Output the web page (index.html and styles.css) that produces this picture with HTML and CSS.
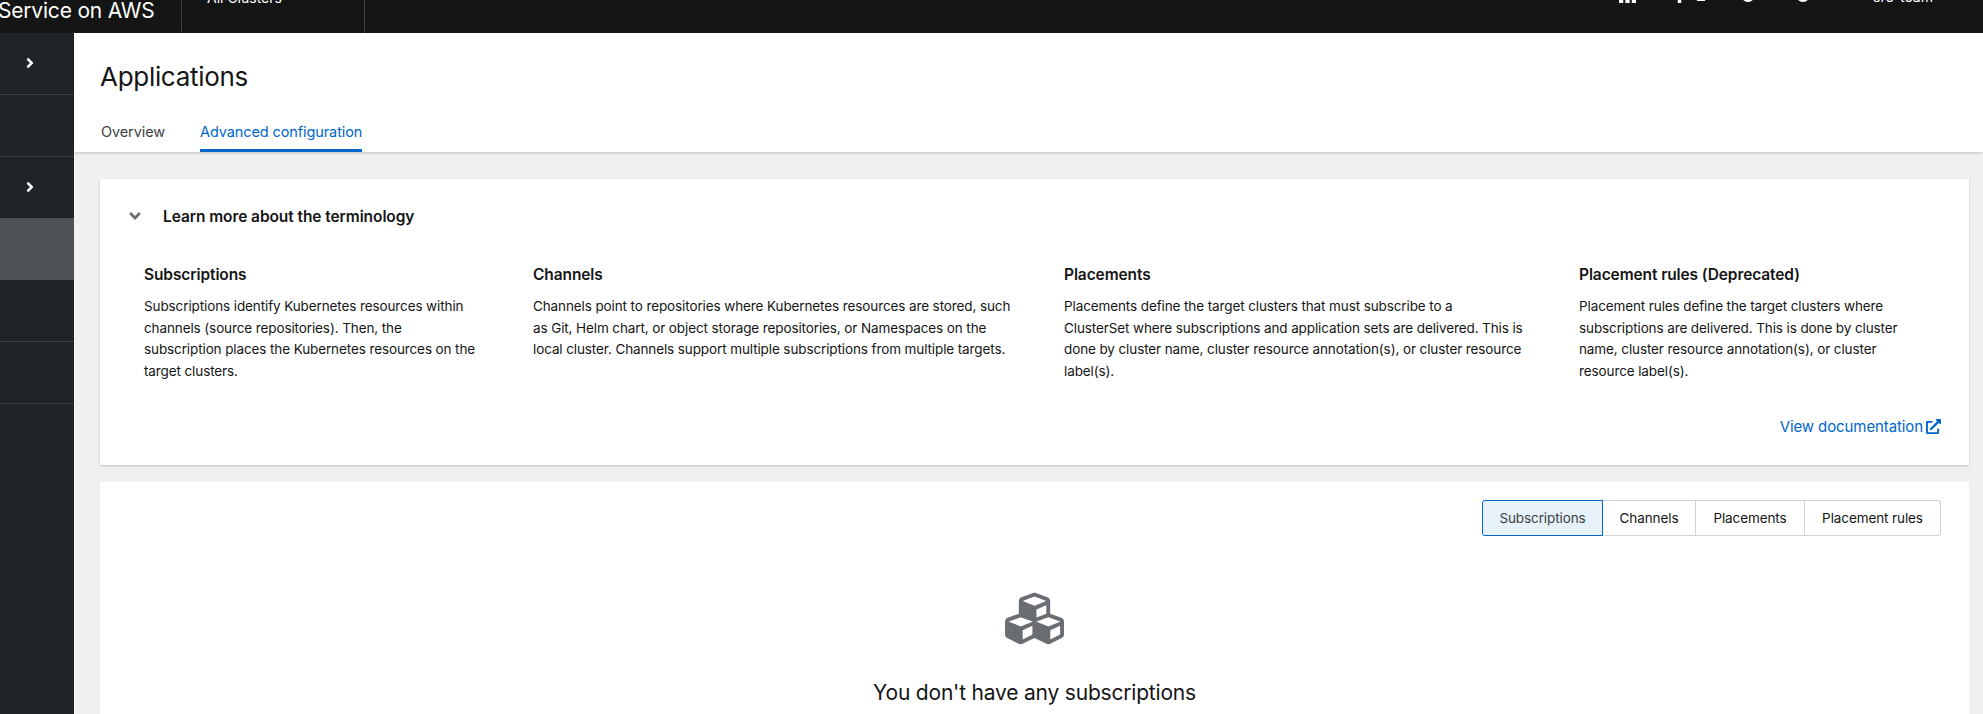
FILE: index.html
```html
<!DOCTYPE html>
<html lang="en">
<head>
<meta charset="utf-8">
<title>Applications</title>
<link rel="stylesheet" href="styles.css">
</head>
<body>
<header class="masthead">
  <div class="masthead-inner">
    <div class="brand">Service on AWS</div>
    <div class="context">All Clusters</div>
    <div class="tools">
      <svg class="tool-apps" viewBox="0 0 16 16"><path d="M0 0h4v4H0zM6 0h4v4H6zM12 0h4v4h-4zM0 6h4v4H0zM6 6h4v4H6zM12 6h4v4h-4zM0 12h4v4H0zM6 12h4v4H6zM12 12h4v4h-4z"/></svg>
      <svg class="tool-help" viewBox="0 0 8 16"><path d="M2 0h4v16H2z"/></svg>
      <svg class="tool-bar" viewBox="0 0 10 16"><path d="M1 11h8v3H1z"/></svg>
      <svg class="tool-round" viewBox="0 0 16 16"><circle cx="8" cy="8" r="7"/></svg>
      <svg class="tool-round second" viewBox="0 0 16 16"><circle cx="8" cy="8" r="7"/></svg>
      <span class="user">sre-team</span>
    </div>
  </div>
</header>
<div class="shell">
  <nav class="sidebar">
    <div class="nav-row"><svg class="chev" viewBox="0 0 256 512"><path d="M224.3 273l-136 136c-9.4 9.4-24.6 9.4-33.9 0l-22.6-22.6c-9.4-9.4-9.4-24.6 0-33.9l96.4-96.4-96.4-96.4c-9.4-9.4-9.4-24.6 0-33.9L54.3 103c9.4-9.4 24.6-9.4 33.9 0l136 136c9.5 9.4 9.5 24.6.1 34z"/></svg></div>
    <div class="nav-row"></div>
    <div class="nav-row flat"><svg class="chev" viewBox="0 0 256 512"><path d="M224.3 273l-136 136c-9.4 9.4-24.6 9.4-33.9 0l-22.6-22.6c-9.4-9.4-9.4-24.6 0-33.9l96.4-96.4-96.4-96.4c-9.4-9.4-9.4-24.6 0-33.9L54.3 103c9.4-9.4 24.6-9.4 33.9 0l136 136c9.5 9.4 9.5 24.6.1 34z"/></svg></div>
    <div class="nav-row selected"></div>
    <div class="nav-row"></div>
    <div class="nav-row"></div>
  </nav>
  <main class="main">
    <section class="page-head">
      <h1 class="title">Applications</h1>
      <div class="tabs">
        <a class="tab">Overview</a>
        <a class="tab active">Advanced configuration</a>
      </div>
    </section>
    <section class="content">
      <div class="card terms">
        <div class="terms-head">
          <svg class="down" viewBox="0 0 320 512"><path d="M143 352.3L7 216.3c-9.4-9.4-9.4-24.6 0-33.9l22.6-22.6c9.4-9.4 24.6-9.4 33.9 0l96.4 96.4 96.4-96.4c9.4-9.4 24.6-9.4 33.9 0l22.6 22.6c9.4 9.4 9.4 24.6 0 33.9l-136 136c-9.2 9.4-24.4 9.4-33.8 0z"/></svg>
          <span class="terms-title">Learn more about the terminology</span>
        </div>
        <div class="terms-grid">
          <div class="term">
            <h4>Subscriptions</h4>
            <p>Subscriptions identify Kubernetes resources within<br>channels (source repositories). Then, the<br>subscription places the Kubernetes resources on the<br>target clusters.</p>
          </div>
          <div class="term">
            <h4>Channels</h4>
            <p>Channels point to repositories where Kubernetes resources are stored, such<br>as Git, Helm chart, or object storage repositories, or Namespaces on the<br>local cluster. Channels support multiple subscriptions from multiple targets.</p>
          </div>
          <div class="term">
            <h4>Placements</h4>
            <p>Placements define the target clusters that must subscribe to a<br>ClusterSet where subscriptions and application sets are delivered. This is<br>done by cluster name, cluster resource annotation(s), or cluster resource<br>label(s).</p>
          </div>
          <div class="term">
            <h4>Placement rules (Deprecated)</h4>
            <p>Placement rules define the target clusters where<br>subscriptions are delivered. This is done by cluster<br>name, cluster resource annotation(s), or cluster<br>resource label(s).</p>
          </div>
        </div>
        <div class="doc-row">
          <a class="doc-link">View documentation
            <svg class="ext" viewBox="0 0 512 512"><path d="M432,320H400a16,16,0,0,0-16,16V448H64V128H208a16,16,0,0,0,16-16V80a16,16,0,0,0-16-16H48A48,48,0,0,0,0,112V464a48,48,0,0,0,48,48H400a48,48,0,0,0,48-48V336A16,16,0,0,0,432,320ZM488,0h-128c-21.37,0-32.05,25.91-17,41l35.73,35.73L135,320.37a24,24,0,0,0,0,34L157.67,377a24,24,0,0,0,34,0L435.28,133.32,471,169c15,15,41,4.5,41-17V24A24,24,0,0,0,488,0Z"/></svg>
          </a>
        </div>
      </div>
      <div class="card list">
        <div class="toggle-row">
          <div class="toggle-group">
            <button class="toggle on t1">Subscriptions</button>
            <button class="toggle t2">Channels</button>
            <button class="toggle t3">Placements</button>
            <button class="toggle t4">Placement rules</button>
          </div>
        </div>
        <div class="empty">
          <svg class="cubes" viewBox="0 0 512 512"><path d="M488.6 250.2L392 214V105.5c0-15-9.3-28.4-23.4-33.7l-100-37.5c-8.1-3.1-17.1-3.1-25.3 0l-100 37.5c-14.1 5.3-23.4 18.7-23.4 33.7V214l-96.6 36.2C9.3 255.5 0 268.9 0 283.9V394c0 13.6 7.7 26.1 19.9 32.2l100 50c10.1 5.1 22.1 5.1 32.2 0l103.9-52 103.9 52c10.1 5.1 22.1 5.1 32.2 0l100-50c12.2-6.1 19.9-18.6 19.9-32.2V283.9c0-15-9.3-28.4-23.4-33.7zM358 214.8l-85 31.9v-68.2l85-37v73.3zM154 104.1l102-38.2 102 38.2v.6l-102 41.4-102-41.4v-.6zm84 291.1l-85 42.5v-79.1l85-38.8v75.4zm0-112l-102 41.4-102-41.4v-.6l102-38.2 102 38.2v.6zm240 112l-85 42.5v-79.1l85-38.8v75.4zm0-112l-102 41.4-102-41.4v-.6l102-38.2 102 38.2v.6z"/></svg>
          <h2 class="empty-title">You don't have any subscriptions</h2>
        </div>
      </div>
    </section>
  </main>
</div>
</body>
</html>
```
FILE: styles.css
```css
* { box-sizing: border-box; }
html, body { height: 100%; }
body {
  margin: 0;
  height: 714px;
  overflow: hidden;
  font-family: Inter, "Open Sans", sans-serif;
  font-size: 14px;
  color: #151515;
  background: #f0f0f0;
}
.masthead { height: 33px; background: #151515; overflow: hidden; position: relative; }
.masthead-inner {
  display: flex;
  height: 76px;
  margin-top: -43px;
  color: #fff;
}
.brand { width: 180px; margin-left: -2px; font-size: 21px; line-height: 76px; letter-spacing: -.2px; white-space: nowrap; padding-top: 16px; }
.context {
  width: 184px;
  height: 76px;
  border-left: 1px solid #3c3f42;
  border-right: 1px solid #3c3f42;
  padding: 0 0 0 25px;
  font-size: 14px;
  line-height: 82px;
  margin-left: 3px;
}
.tools { margin-left: auto; display: flex; align-items: flex-end; height: 46px; padding-right: 50px; }
.tools svg { fill: #fff; display: block; }
.tool-apps { width: 17px; height: 17px; }
.tool-help { width: 7px; height: 14px; margin-left: 40px; }
.tool-bar { width: 10px; height: 16px; margin-left: 13px; }
.tool-round { width: 16px; height: 16px; margin-left: 34px; }
.tool-round.second { margin-left: 39px; }
.user { margin-left: 62px; font-size: 14px; line-height: 18px; margin-bottom: -3px; }
.shell { display: flex; height: 681px; }
.sidebar { width: 74px; flex: none; background: #212427; }
.nav-row {
  height: 62px;
  border-bottom: 1px solid #3c3f42;
  display: flex;
  align-items: center;
  padding-left: 25px;
}
.nav-row.flat { border-bottom: 0; height: 61px; }
.nav-row.selected { background: #4f5255; border-bottom: 0; }
.chev { width: 10px; height: 16px; fill: #fff; margin-top: -2px; }
.main { flex: 1; min-width: 0; }
.page-head {
  height: 119px;
  background: #fff;
  padding: 23px 0 0 26px;
  box-shadow: 0 1px 3px rgba(3,3,3,.2);
  position: relative;
}
.title { margin: 0; font-size: 26px; font-weight: 400; line-height: 42px; letter-spacing: -.3px; }
.tabs { display: flex; gap: 35px; margin: 16px 0 0 1px; }
.tab { font-size: 14.5px; line-height: 24px; height: 38px; padding-top: 6px; color: #3c3f42; letter-spacing: -.1px; }
.tab.active { color: #06c; border-bottom: 3px solid #06c; }
.content { padding: 27px 14px 0 26px; }
.card { background: #fff; }
.terms { height: 286px; box-shadow: 0 1px 2px rgba(3,3,3,.2); padding: 25px 28px 0 30px; }
.terms-head { display: flex; align-items: center; height: 24px; }
.down { width: 12px; height: 18px; fill: #6a6e73; margin-left: -1px; }
.terms-title { margin-left: 22px; font-size: 15.5px; font-weight: 600; color: #151515; letter-spacing: -.08px; }
.terms-grid {
  display: grid;
  grid-template-columns: 341px 483px 467px 362px;
  column-gap: 48px;
  margin: 35px 0 0 14px;
}
.term h4 { margin: 0 0 9px; font-size: 15.5px; font-weight: 600; line-height: 24px; letter-spacing: -.1px; }
.term p { margin: 0; font-size: 13.5px; line-height: 21.5px; color: #151515; letter-spacing: -.11px; white-space: nowrap; }
.doc-row { display: flex; justify-content: flex-end; margin-top: 35px; }
.doc-link { color: #06c; font-size: 15px; display: flex; align-items: center; gap: 3px; letter-spacing: -.1px; }
.ext { width: 15px; height: 15px; fill: #06c; }
.list { margin-top: 17px; height: 300px; padding: 18px 0 0; }
.toggle-row { display: flex; justify-content: flex-end; padding-right: 28px; }
.toggle-group { display: flex; }
.toggle {
  height: 36px;
  padding: 0;
  font: inherit;
  font-size: 13.5px;
  letter-spacing: -.1px;
  color: #151515;
  background: #fff;
  border: 1px solid #d2d2d2;
  border-left-width: 0;
}
.t1 { width: 121px; }
.t2 { width: 93px; }
.t3 { width: 109px; }
.t4 { width: 136px; }
.toggle:first-child { border-radius: 3px 0 0 3px; }
.toggle:last-child { border-radius: 0 3px 3px 0; }
.toggle.on { background: #e7f1fa; border: 1px solid #06c; color: #3c3f42; }
.empty { display: flex; flex-direction: column; align-items: center; margin-top: 53px; }
.cubes { width: 59px; height: 59px; fill: #6a6e73; }
.empty-title { margin: 30px 0 0; font-size: 21px; font-weight: 400; line-height: 30px; letter-spacing: -.2px; }
```
